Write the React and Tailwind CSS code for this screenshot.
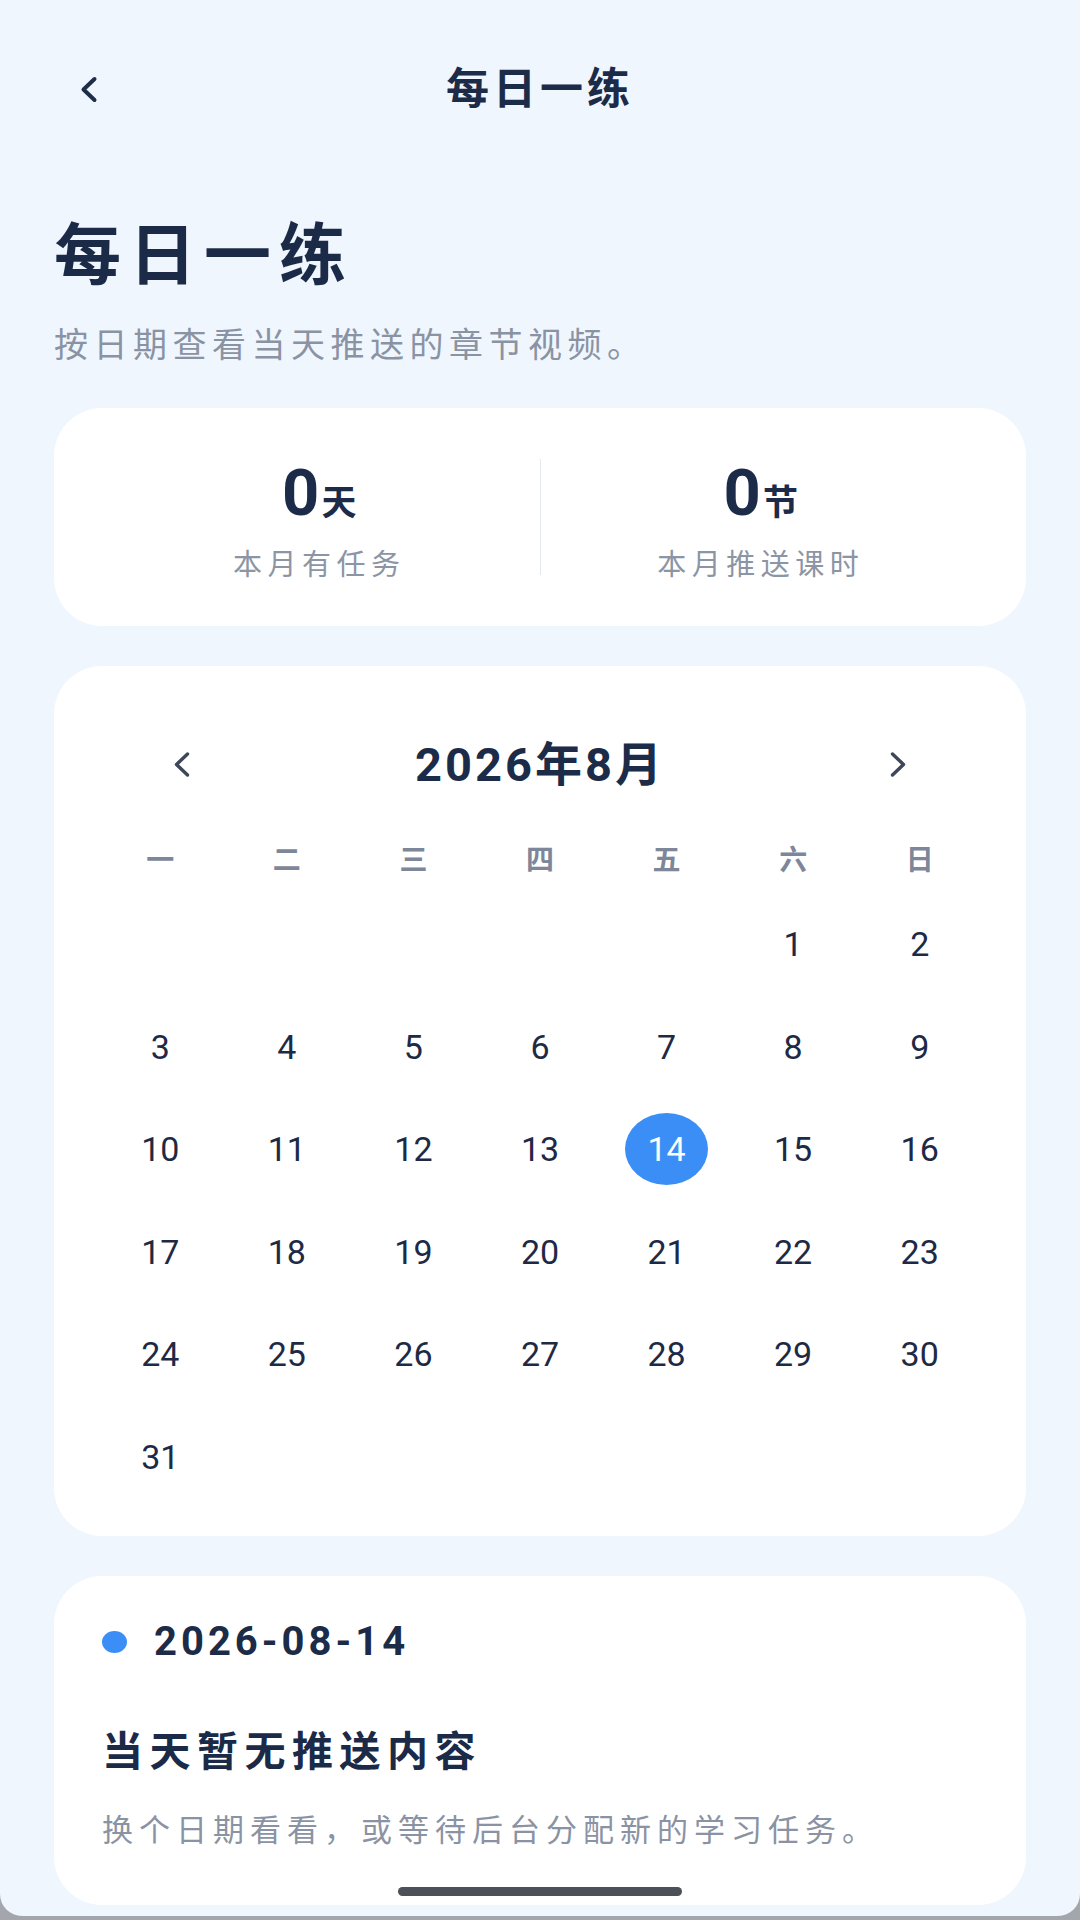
import React from 'react';

const weekdays = ['一', '二', '三', '四', '五', '六', '日'];

// August 2026 starts on a Saturday
const buildDays = () => {
  const cells = [];
  for (let i = 0; i < 5; i++) cells.push(null);
  for (let d = 1; d <= 31; d++) cells.push(d);
  return cells;
};

function Chevron({ dir = 'left', className = '', weight = 3.4 }) {
  const points = dir === 'left' ? '16,3 5,13.5 16,24' : '5,3 16,13.5 5,24';
  return (
    <svg width="22" height="27" viewBox="0 0 21 27" className={className} fill="none">
      <polyline points={points} stroke="currentColor" strokeWidth={weight} strokeLinecap="round" strokeLinejoin="round" />
    </svg>
  );
}

export default function App() {
  const selected = 14;
  const days = buildDays();

  return (
    <div className="w-[1080px] h-[1920px] bg-[#a3a7ad] font-['Roboto','Noto_Sans_CJK_SC',sans-serif]">
      <div className="relative h-[1916px] bg-[#f0f6fe] rounded-b-[22px] overflow-hidden">
        {/* Top bar */}
        <div className="grid grid-cols-[1fr_auto_1fr] items-center h-[178px] px-[78px]">
          <div className="text-[#1e2d4a]">
            <Chevron dir="left" weight={4} />
          </div>
          <div className="text-[43px] leading-none font-bold tracking-[4px] text-[#1c2b47]">每日一练</div>
          <div />
        </div>

        {/* Heading */}
        <div className="px-[54px]">
          <h1 className="mt-[41px] text-[67px] leading-[74px] font-bold tracking-[8px] text-[#1a2a47]">每日一练</h1>
          <p className="mt-[30px] text-[34px] leading-[44px] tracking-[5.5px] text-[#8a93a3]">按日期查看当天推送的章节视频。</p>
        </div>

        {/* Stats */}
        <div className="mx-[54px] mt-[41px] h-[218px] rounded-[48px] bg-white px-[45px] pt-[10px] flex items-center">
          <div className="flex-1 flex flex-col items-center">
            <div className="flex items-baseline h-[64px] leading-[64px] text-[#1b2b48] font-bold">
              <span className="text-[65px]">0</span>
              <span className="text-[35px] ml-[2px]">天</span>
            </div>
            <div className="mt-[22px] text-[29px] leading-[36px] tracking-[5.5px] text-[#8b95a5]">本月有任务</div>
          </div>
          <div className="w-px h-[116px] bg-[#e4e9f0] -mt-[10px]" />
          <div className="flex-1 flex flex-col items-center">
            <div className="flex items-baseline h-[64px] leading-[64px] text-[#1b2b48] font-bold">
              <span className="text-[65px]">0</span>
              <span className="text-[35px] ml-[2px]">节</span>
            </div>
            <div className="mt-[22px] text-[29px] leading-[36px] tracking-[5.5px] text-[#8b95a5]">本月推送课时</div>
          </div>
        </div>

        {/* Calendar */}
        <div className="mx-[54px] mt-[40px] h-[870px] rounded-[48px] bg-white px-[43px] pt-[56px]">
          <div className="flex items-center justify-between h-[84px] px-[74px] text-[#3e4759]">
            <Chevron dir="left" />
            <div className="text-[47px] leading-none font-bold tracking-[3px] text-[#1c2b47]">2026年8月</div>
            <Chevron dir="right" />
          </div>
          <div className="mt-[25px] grid grid-cols-7 h-[60px] items-center">
            {weekdays.map((w) => (
              <div key={w} className="text-center text-[28px] leading-none font-bold text-[#7d8799]">{w}</div>
            ))}
          </div>
          <div className="mt-[2px] grid grid-cols-7 auto-rows-[102.5px]">
            {days.map((d, i) => (
              <div key={i} className="flex items-center justify-center">
                {d === selected ? (
                  <div className="w-[83px] h-[72px] rounded-[50%] bg-[#3a8ef5] flex items-center justify-center text-[34px] text-white">
                    {d}
                  </div>
                ) : (
                  <span className="text-[34px] leading-none text-[#1e2a45]">{d}</span>
                )}
              </div>
            ))}
          </div>
        </div>

        {/* Selected day */}
        <div className="mx-[54px] mt-[40px] h-[329px] rounded-[48px] bg-white px-[48px] pt-[44px]">
          <div className="flex items-center h-[44px]">
            <div className="w-[25px] h-[22px] rounded-[50%] bg-[#3a8ef5]" />
            <div className="ml-[27px] text-[40px] leading-none font-bold tracking-[4px] text-[#1c2b47]">2026-08-14</div>
          </div>
          <div className="mt-[63px] text-[41px] leading-[50px] font-bold tracking-[6.5px] text-[#1a2a47]">当天暂无推送内容</div>
          <div className="mt-[34px] text-[31px] leading-[40px] tracking-[6px] text-[#8a93a3]">换个日期看看，或等待后台分配新的学习任务。</div>
        </div>

        {/* Home indicator */}
        <div className="absolute left-[398px] top-[1887px] w-[284px] h-[9px] rounded-full bg-[#4b5059]" />
      </div>
    </div>
  );
}
